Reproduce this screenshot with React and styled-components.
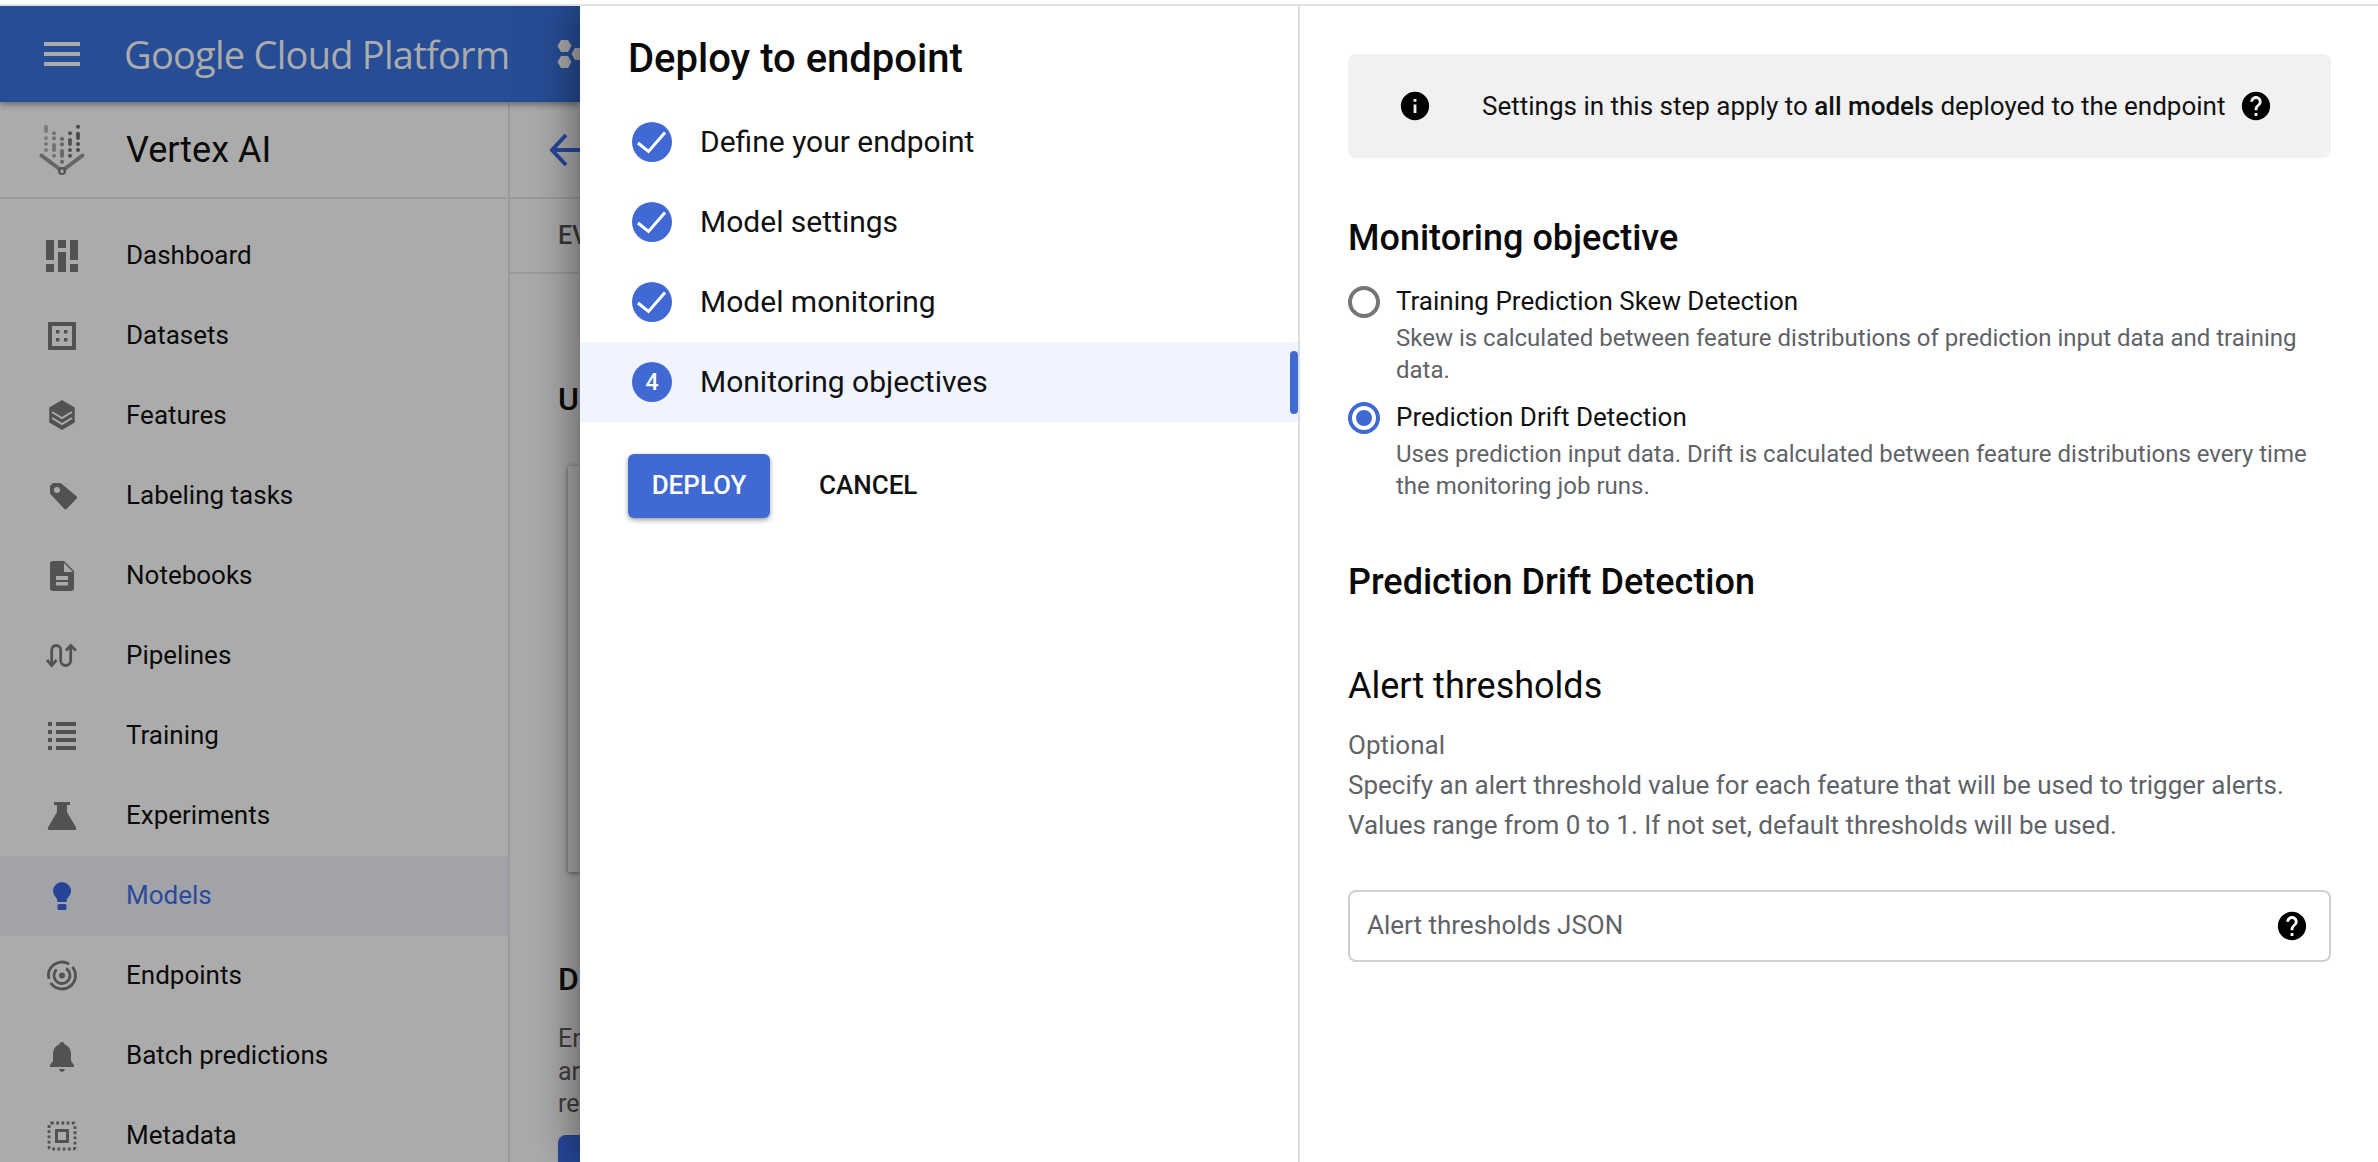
import React from "react";
import styled, { createGlobalStyle } from "styled-components";

const Global = createGlobalStyle`
  html, body { margin: 0; padding: 0; background: #fff; }
  body { font-family: Roboto, "Liberation Sans", sans-serif; overflow: hidden; }
  * { box-sizing: border-box; }
`;

const Page = styled.div`
  width: 2378px;
  height: 1162px;
  display: flex;
  flex-direction: column;
  overflow: hidden;
`;
const TopStrip = styled.div`
  height: 6px;
  flex: none;
  background: #fff;
  border-bottom: 2px solid #dfe0e3;
  position: relative;
  z-index: 3;
`;
const Stage = styled.div`
  flex: 1;
  min-height: 0;
  display: flex;
`;
const Backdrop = styled.div`
  width: 580px;
  flex: none;
  display: flex;
  flex-direction: column;
  background: #ababab;
  overflow: hidden;
`;
const AppBar = styled.header`
  height: 96px;
  flex: none;
  display: flex;
  align-items: center;
  background: #264d96;
  box-shadow: 0 3px 6px rgba(0, 0, 0, 0.35);
  position: relative;
  z-index: 1;
  padding-left: 38px;
  color: #ababab;
`;
const BrandText = styled.span`
  font-family: "Open Sans", Lato, sans-serif;
  font-size: 38px;
  letter-spacing: -0.75px;
  margin-left: 38px;
  white-space: nowrap;
  line-height: 48px;
  flex: none;
`;
const HexIcon = styled.svg`
  width: 36px;
  height: 36px;
  flex: none;
  margin-left: 47px;
`;
const Body = styled.div`
  flex: 1;
  min-height: 0;
  display: flex;
`;
const Sidebar = styled.aside`
  width: 510px;
  flex: none;
  border-right: 2px solid #9b9b9b;
  display: flex;
  flex-direction: column;
`;
const ProductRow = styled.div`
  height: 97px;
  flex: none;
  display: flex;
  align-items: center;
  padding-left: 32px;
  gap: 34px;
  border-bottom: 2px solid #9b9b9b;
`;
const ProductName = styled.span`
  font-size: 36px;
  color: #0b0b0b;
`;
const NavList = styled.nav`
  padding-top: 17px;
  display: flex;
  flex-direction: column;
`;
const NavRow = styled.div`
  height: 80px;
  flex: none;
  display: flex;
  align-items: center;
  padding-left: 42px;
  gap: 44px;
  font-size: 26px;
  background: ${(p) => (p.$active ? "#a2a3a9" : "transparent")};
  color: ${(p) => (p.$active ? "#2a4a9b" : "#0b0b0b")};
`;
const NavLabel = styled.span`
  margin-top: -2px;
`;
const NavIcon = styled.svg`
  width: 40px;
  height: 40px;
  flex: none;
  margin-top: -2px;
  fill: currentColor;
  color: ${(p) => (p.$active ? "#264596" : "#525252")};
`;
const Behind = styled.main`
  flex: 1;
  min-width: 0;
  display: flex;
  flex-direction: column;
  overflow: hidden;
`;
const BackRow = styled.div`
  height: 97px;
  flex: none;
  border-bottom: 2px solid #9b9b9b;
  display: flex;
  align-items: center;
  padding-left: 36px;
`;
const TabRow = styled.div`
  height: 75px;
  flex: none;
  border-bottom: 2px solid #9b9b9b;
  display: flex;
  align-items: center;
  padding-left: 48px;
  font-size: 25px;
  font-weight: 500;
  color: #3a3a3a;
  white-space: nowrap;
`;
const BehindBody = styled.div`
  padding-left: 48px;
  flex: 1;
  display: flex;
  flex-direction: column;
`;
const BehindTitle = styled.div`
  font-size: 32px;
  font-weight: 500;
  line-height: 40px;
  color: #0b0b0b;
  white-space: nowrap;
  margin-top: ${(p) => p.$top}px;
`;
const BehindCard = styled.div`
  height: 406px;
  flex: none;
  margin: 47px 0 0 10px;
  background: #ababab;
  box-shadow: 0 1px 5px rgba(0, 0, 0, 0.45);
`;
const BehindText = styled.div`
  font-size: 25px;
  line-height: 32.5px;
  color: #3f3f3f;
  margin-top: 24px;
  white-space: pre;
`;
const BehindButton = styled.div`
  height: 60px;
  width: 120px;
  flex: none;
  margin-top: 14px;
  background: #27489a;
  border-radius: 8px;
`;

const Drawer = styled.div`
  flex: 1;
  min-width: 0;
  display: flex;
  background: #fff;
  box-shadow: 0 0 46px rgba(0, 0, 0, 0.55);
  position: relative;
  z-index: 2;
`;
const StepperPane = styled.section`
  width: 720px;
  flex: none;
  border-right: 2px solid #dcdde0;
  display: flex;
  flex-direction: column;
`;
const DrawerTitle = styled.h1`
  margin: 31px 0 21px 48px;
  font-size: 40px;
  font-weight: 500;
  line-height: 44px;
  color: #0a0a0a;
`;
const StepRow = styled.div`
  position: relative;
  height: 80px;
  flex: none;
  display: flex;
  align-items: center;
  padding-left: 52px;
  gap: 28px;
  font-size: 30px;
  color: #111;
  background: ${(p) => (p.$active ? "#f0f4fe" : "transparent")};
`;
const StepLabel = styled.span`
  margin-top: -2px;
`;
const StepBadge = styled.div`
  width: 40px;
  height: 40px;
  flex: none;
  border-radius: 50%;
  background: #4169d3;
  color: #fff;
  display: flex;
  align-items: center;
  justify-content: center;
  font-size: 23px;
  font-weight: 500;
`;
const StepMarker = styled.div`
  position: absolute;
  right: 0;
  top: 9px;
  width: 8px;
  height: 63px;
  border-radius: 4px;
  background: #4169d3;
`;
const Actions = styled.div`
  display: flex;
  align-items: center;
  margin: 32px 0 0 48px;
`;
const DeployButton = styled.button`
  width: 142px;
  height: 64px;
  border: 0;
  border-radius: 6px;
  padding: 0 0 2px;
  background: #4169d3;
  color: #fff;
  font: 500 26px Roboto, sans-serif;
  box-shadow: 0 2px 5px rgba(0, 0, 0, 0.4);
`;
const CancelButton = styled.button`
  margin-left: 49px;
  padding: 0 0 2px;
  border: 0;
  background: none;
  color: #111;
  font: 500 26px Roboto, sans-serif;
`;
const ContentPane = styled.section`
  flex: 1;
  min-width: 0;
  padding: 48px 47px 0 48px;
  display: flex;
  flex-direction: column;
`;
const InfoBox = styled.div`
  height: 104px;
  flex: none;
  background: #f1f1f1;
  border-radius: 8px;
  display: flex;
  align-items: center;
  padding-left: 50px;
  font-size: 26px;
  color: #111;
`;
const InfoText = styled.span`
  margin: 0 14px 0 50px;
  b { font-weight: 500; }
`;
const BlackIcon = styled.svg`
  width: 34px;
  height: 34px;
  flex: none;
  fill: #000;
`;
const Heading = styled.h2`
  margin: ${(p) => p.$top}px 0 0;
  font-size: 36px;
  font-weight: ${(p) => p.$weight || 500};
  line-height: 40px;
  color: #0a0a0a;
`;
const RadioOption = styled.div`
  margin-top: ${(p) => p.$top}px;
  display: grid;
  grid-template-columns: 32px 1fr;
  column-gap: 16px;
`;
const RadioCircle = styled.div`
  width: 32px;
  height: 32px;
  border-radius: 50%;
  border: 4px solid ${(p) => (p.$on ? "#4169d3" : "#757575")};
  display: flex;
  align-items: center;
  justify-content: center;
  &::after {
    content: "";
    width: 16px;
    height: 16px;
    border-radius: 50%;
    background: ${(p) => (p.$on ? "#4169d3" : "transparent")};
  }
`;
const RadioLabel = styled.div`
  font-size: 26px;
  line-height: 30px;
  color: #111;
`;
const RadioHelp = styled.div`
  grid-column: 2;
  margin-top: 4px;
  font-size: 24px;
  line-height: 32px;
  color: #5f6368;
`;
const Muted = styled.div`
  font-size: 26px;
  line-height: 40px;
  color: #5f6368;
  margin-top: ${(p) => p.$top || 0}px;
`;
const Field = styled.label`
  height: 72px;
  flex: none;
  margin-top: 45px;
  border: 2px solid #cfcfcf;
  border-radius: 8px;
  display: flex;
  align-items: center;
  padding: 0 20px 0 17px;
`;
const FieldInput = styled.input`
  flex: 1;
  min-width: 0;
  border: 0;
  outline: 0;
  padding: 0 0 2px;
  background: none;
  font: 400 26px Roboto, sans-serif;
  color: #5f6368;
  &::placeholder { color: #5f6368; opacity: 1; }
`;

const HELP = "M12 2C6.48 2 2 6.48 2 12s4.48 10 10 10 10-4.48 10-10S17.52 2 12 2zm1 17h-2v-2h2v2zm2.07-7.75l-.9.92C13.45 12.9 13 13.5 13 15h-2v-.5c0-1.1.45-2.1 1.17-2.83l1.24-1.26c.37-.36.59-.86.59-1.41 0-1.1-.9-2-2-2s-2 .9-2 2H8c0-2.21 1.79-4 4-4s4 1.79 4 4c0 .88-.36 1.68-.93 2.25z";
const INFO = "M12 2C6.48 2 2 6.48 2 12s4.48 10 10 10 10-4.48 10-10S17.52 2 12 2zm1 15h-2v-6h2v6zm0-8h-2V7h2v2z";
const BG = "#ababab";

const icons = {
  dashboard: (
    <path d="M4 5h8v20H4zM4 29h8v8H4zM16 5h8v8h-8zM16 17h8v20h-8zM28 5h8v20h-8zM28 29h8v8h-8z" />
  ),
  datasets: (
    <>
      <rect x="8" y="9" width="24" height="24" fill="none" stroke="currentColor" strokeWidth="4" />
      <path d="M14 15h3.5v3.5H14zM22 15h3.5v3.5H22zM14 23h3.5v3.5H14zM22 23h3.5v3.5H22z" />
    </>
  ),
  features: (
    <>
      <path d="M20 6l12 7v14l-12 7-12-7V13z" stroke="currentColor" strokeWidth="1.5" strokeLinejoin="round" />
      <path d="M10 17l10 6 10-6M10 23l10 6 10-6" fill="none" stroke={BG} strokeWidth="2" />
    </>
  ),
  tag: (
    <>
      <path d="M9.5 11.5V18l14 15 10-10.500L18 9.500h-6.500z" stroke="currentColor" strokeWidth="3" strokeLinejoin="round" />
      <circle cx="15" cy="15" r="3" fill={BG} />
    </>
  ),
  doc: (
    <>
      <path d="M11 6h11l10 10v17a3 3 0 0 1-3 3H11a3 3 0 0 1-3-3V9a3 3 0 0 1 3-3z" />
      <path d="M22 8l9 9h-9zM14 21h12v4H14zM14 27h12v3.500H14z" fill={BG} />
    </>
  ),
  pipelines: (
    <>
      <path d="M9.700 30V15a4.500 4.500 0 0 1 9 0v10.500a5 5 0 0 0 10 0V11" fill="none" stroke="currentColor" strokeWidth="2.800" />
      <path d="M5 25l4.700 5.500L14.500 25M24 15.500l4.700-5L34 15.500" fill="none" stroke="currentColor" strokeWidth="2.800" />
    </>
  ),
  training: (
    <path d="M6 7h4v4H6zM14 7h20v4H14zM6 15h4v4H6zM14 15h20v4H14zM6 23h4v4H6zM14 23h20v4H14zM6 31h4v4H6zM14 31h20v4H14z" />
  ),
  experiments: (
    <path d="M12 7h16v3h-3v7l9 15.500Q35 35 32 35H8q-3 0-2-2.500L15 17v-7h-3z" />
  ),
  models: (
    <>
      <path d="M20 7a9 9 0 0 1 9 9c0 3.500-2.500 5.500-4 8l-.5 3h-9l-.5-3c-1.500-2.500-4-4.500-4-8a9 9 0 0 1 9-9z" />
      <rect x="15.500" y="29" width="9" height="6" rx="1.500" />
    </>
  ),
  endpoints: (
    <>
      <circle cx="20" cy="20.500" r="13.500" fill="none" stroke="currentColor" strokeWidth="2.800" pathLength="100" strokeDasharray="52 5 38 5" transform="rotate(-40 20 20.500)" />
      <circle cx="20" cy="20.500" r="8" fill="none" stroke="currentColor" strokeWidth="2.800" pathLength="100" strokeDasharray="80 20" transform="rotate(-60 20 20.500)" />
      <circle cx="20" cy="20.500" r="3" />
    </>
  ),
  bell: (
    <>
      <path d="M20 7c1.400 0 2.500 1 2.500 2.300C27 11 29 15 29 19v7l3 4v2H8v-2l3-4v-7c0-4 2-8 6.500-9.700C17.500 8 18.600 7 20 7z" />
      <path d="M17 34h6q-1 3-3 3t-3-3z" />
    </>
  ),
  metadata: (
    <>
      <rect x="7" y="8" width="26" height="26" rx="2" fill="none" stroke="currentColor" strokeWidth="2.800" strokeDasharray="2.800 2.400" />
      <rect x="14.500" y="15.500" width="11" height="11" fill="none" stroke="currentColor" strokeWidth="3" />
    </>
  ),
};

const navItems = [
  ["Dashboard", "dashboard"],
  ["Datasets", "datasets"],
  ["Features", "features"],
  ["Labeling tasks", "tag"],
  ["Notebooks", "doc"],
  ["Pipelines", "pipelines"],
  ["Training", "training"],
  ["Experiments", "experiments"],
  ["Models", "models", true],
  ["Endpoints", "endpoints"],
  ["Batch predictions", "bell"],
  ["Metadata", "metadata"],
];

const steps = ["Define your endpoint", "Model settings", "Model monitoring"];

const LogoColumn = ({ x, color, parts }) => (
  <g fill={color}>
    {parts.map(([a, b], i) =>
      b ? (
        <rect key={i} x={x - 1.9} y={a} width="3.800" height={b - a} rx="1.900" />
      ) : (
        <circle key={i} cx={x} cy={a} r="2" />
      )
    )}
  </g>
);

const VertexLogo = () => (
  <svg width="60" height="60" viewBox="0 0 60 60" style={{ flex: "none" }}>
    <LogoColumn x={14} color="#7b7b7b" parts={[[5, 13], [18.3], [24], [30]]} />
    <LogoColumn x={22} color="#727272" parts={[[13.3], [18.3], [23, 32], [35.7]]} />
    <LogoColumn x={30} color="#666" parts={[[19], [24.3], [29, 38], [41.7]]} />
    <LogoColumn x={38} color="#505050" parts={[[13.3], [18, 26], [30], [35.7]]} />
    <LogoColumn x={46} color="#484848" parts={[[6.7], [11.7, 20], [24], [30]]} />
    <path d="M9.500 35.500L27.500 49M50.500 35.500L32.500 49" stroke="#666" strokeWidth="4" strokeLinecap="round" />
    <circle cx="30" cy="51" r="3" fill="none" stroke="#555" strokeWidth="2.200" />
  </svg>
);

export default function App() {
  return (
    <Page>
      <Global />
      <TopStrip />
      <Stage>
        <Backdrop>
          <AppBar>
            <svg width="48" height="48" viewBox="0 0 24 24" fill="#ababab" style={{ flex: "none" }}>
              <path d="M3 18h18v-2H3v2zm0-5h18v-2H3v2zm0-7v2h18V6H3z" />
            </svg>
            <BrandText>Google Cloud Platform</BrandText>
            <HexIcon viewBox="0 0 36 36" fill="#ababab">
              <path d="M5 4h7l3.500 6-3.500 6H5L1.500 10zM5 20h7l3.500 6-3.500 6H5l-3.500-6zM19 12h7l3.500 6-3.500 6h-7l-3.500-6z" />
            </HexIcon>
          </AppBar>
          <Body>
            <Sidebar>
              <ProductRow>
                <VertexLogo />
                <ProductName>Vertex AI</ProductName>
              </ProductRow>
              <NavList>
                {navItems.map(([label, icon, active]) => (
                  <NavRow key={label} $active={active}>
                    <NavIcon $active={active} viewBox="0 0 40 40">
                      {icons[icon]}
                    </NavIcon>
                    <NavLabel>{label}</NavLabel>
                  </NavRow>
                ))}
              </NavList>
            </Sidebar>
            <Behind>
              <BackRow>
                <svg width="48" height="48" viewBox="0 0 48 48" fill="none" stroke="#27489a" strokeWidth="4" style={{ flex: "none" }}>
                  <path d="M20 9L6 24l14 15M6 24h40" />
                </svg>
              </BackRow>
              <TabRow>EV</TabRow>
              <BehindBody>
                <BehindTitle $top={105}>U</BehindTitle>
                <BehindCard />
                <BehindTitle $top={87}>D</BehindTitle>
                <BehindText>{"En\nar\nre"}</BehindText>
                <BehindButton />
              </BehindBody>
            </Behind>
          </Body>
        </Backdrop>
        <Drawer>
          <StepperPane>
            <DrawerTitle>Deploy to endpoint</DrawerTitle>
            {steps.map((s) => (
              <StepRow key={s}>
                <StepBadge>
                  <svg width="40" height="40" viewBox="0 0 40 40" fill="none" stroke="#fff" strokeWidth="3">
                    <path d="M6 21l10.500 8.500L33 10.500" />
                  </svg>
                </StepBadge>
                <StepLabel>{s}</StepLabel>
              </StepRow>
            ))}
            <StepRow $active>
              <StepBadge>4</StepBadge>
              <StepLabel>Monitoring objectives</StepLabel>
              <StepMarker />
            </StepRow>
            <Actions>
              <DeployButton>DEPLOY</DeployButton>
              <CancelButton>CANCEL</CancelButton>
            </Actions>
          </StepperPane>
          <ContentPane>
            <InfoBox>
              <BlackIcon viewBox="0 0 24 24"><path d={INFO} /></BlackIcon>
              <InfoText>
                Settings in this step apply to <b>all models</b> deployed to the endpoint
              </InfoText>
              <BlackIcon viewBox="0 0 24 24"><path d={HELP} /></BlackIcon>
            </InfoBox>
            <Heading $top={60}>Monitoring objective</Heading>
            <RadioOption $top={28}>
              <RadioCircle />
              <RadioLabel>Training Prediction Skew Detection</RadioLabel>
              <RadioHelp>
                Skew is calculated between feature distributions of prediction input data and training data.
              </RadioHelp>
            </RadioOption>
            <RadioOption $top={16}>
              <RadioCircle $on />
              <RadioLabel>Prediction Drift Detection</RadioLabel>
              <RadioHelp>
                Uses prediction input data. Drift is calculated between feature distributions every time the monitoring job runs.
              </RadioHelp>
            </RadioOption>
            <Heading $top={60}>Prediction Drift Detection</Heading>
            <Heading $top={64} $weight={400}>Alert thresholds</Heading>
            <Muted $top={19}>Optional</Muted>
            <Muted>Specify an alert threshold value for each feature that will be used to trigger alerts.</Muted>
            <Muted>Values range from 0 to 1. If not set, default thresholds will be used.</Muted>
            <Field>
              <FieldInput placeholder="Alert thresholds JSON" readOnly />
              <BlackIcon viewBox="0 0 24 24"><path d={HELP} /></BlackIcon>
            </Field>
          </ContentPane>
        </Drawer>
      </Stage>
    </Page>
  );
}
